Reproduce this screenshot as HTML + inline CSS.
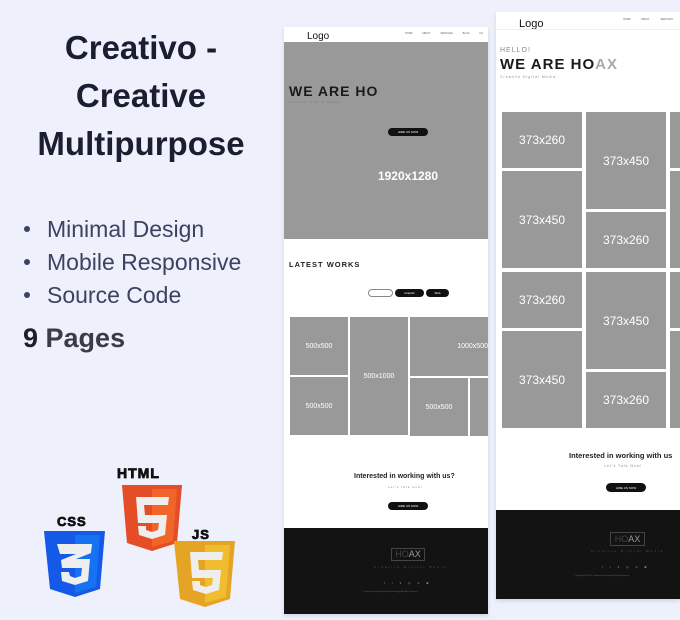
<!DOCTYPE html>
<html><head><meta charset="utf-8"><style>
*{margin:0;padding:0;box-sizing:border-box}
body{width:680px;height:620px;background:#eef0fb;font-family:"Liberation Sans",sans-serif;position:relative;overflow:hidden}
.abs{position:absolute}
.t{left:0;width:282px;text-align:center;font-weight:bold;font-size:33px;color:#1b1d30;line-height:48px}
.li{left:24px;font-size:23px;color:#3d4162}
.li:before{content:"";display:inline-block;width:6px;height:6px;border-radius:50%;background:#3d4162;margin-right:17px;vertical-align:middle;position:relative;top:-2px}
.g{background:#999;color:#fff;display:flex;align-items:center;justify-content:center;position:absolute}
.btn{background:#111;color:#fff;border-radius:6px;font-size:3px;display:flex;align-items:center;justify-content:center;position:absolute}
</style></head><body>
<div class="abs t" style="top:24px">Creativo -</div>
<div class="abs t" style="top:72px">Creative</div>
<div class="abs t" style="top:120px">Multipurpose</div>
<div class="abs li" style="top:216px">Minimal Design</div>
<div class="abs li" style="top:249px">Mobile Responsive</div>
<div class="abs li" style="top:282px">Source Code</div>
<div class="abs" style="left:23px;top:323px;font-size:27px;font-weight:bold;color:#1b1d30">9 <span style="color:#3a3a48">Pages</span></div>

<svg class="abs" style="left:40px;top:460px" width="200" height="155" viewBox="0 0 200 155">
<g font-family="Liberation Sans,sans-serif" font-weight="bold" fill="#111" stroke="#111" stroke-width="0.8">
<text x="77" y="18" font-size="14" letter-spacing="1">HTML</text>
<text x="17" y="66" font-size="13" letter-spacing="1">CSS</text>
<text x="152" y="79" font-size="13" letter-spacing="1">JS</text>
</g>
<path d="M82 25h60l-5 58-25 8-25-8z" fill="#e44d26"/><path d="M112 29h25l-4 52-21 6z" fill="#f16529"/>
<path d="M96 37h33l-1 8h-24l1 10h22l-2 20-13 4-13-4-1-9h8l0 4 6 2 6-2 1-7h-21z" fill="#eee"/>
<path d="M4 71h61l-5 58-25 8-25-8z" fill="#1559e8"/><path d="M35 75h25l-4 52-21 6z" fill="#1572f0"/>
<path d="M17 84h35l-1 9-15 6h14l-2 22-13 4-13-4-1-9h8l1 4 5 2 6-2 1-8h-20l-1-8 15-6h-16z" fill="#eee"/>
<path d="M134 81h61l-5 58-25 8-25-8z" fill="#e5a424"/><path d="M165 85h25l-4 52-21 6z" fill="#efbd2e"/>
<path d="M150 92h33l-1 8h-24l1 10h22l-2 20-13 4-13-4-1-9h8l0 4 6 2 6-2 1-7h-21z" fill="#eee"/>
</svg>

<!-- screen 1 -->
<div class="abs" style="left:284px;top:27px;width:204px;height:587px;background:#fff;box-shadow:0 2px 4px rgba(0,0,0,.12)">
 <div class="abs" style="left:23px;top:4px;font-size:10px;color:#111">Logo</div>
 <div class="abs" style="left:121px;top:5px;font-size:2.5px;color:#666;word-spacing:9px;white-space:nowrap">HOME ABOUT SERVICES BLOG CO</div>
 <div class="g" style="left:0;top:15px;width:204px;height:197px;font-size:12px;font-weight:bold;padding-top:70px;padding-left:44px">1920x1280</div>
 <div class="abs" style="left:5px;top:56px;font-size:14px;font-weight:bold;color:#1a1a1a;letter-spacing:1px">WE ARE HO</div>
 <div class="abs" style="left:5px;top:73px;font-size:3px;color:#777;letter-spacing:1px">Creative Digital Media.</div>
 <div class="btn" style="left:104px;top:101px;width:40px;height:8px">HIRE US NOW</div>
 <div class="abs" style="left:5px;top:233px;font-size:7.5px;font-weight:bold;letter-spacing:1px;color:#222">LATEST WORKS</div>
 <div class="abs" style="left:84px;top:262px;width:25px;height:8px;border:1px solid #888;border-radius:5px"></div>
 <div class="btn" style="left:111px;top:262px;width:29px;height:8px">Graphic</div>
 <div class="btn" style="left:142px;top:262px;width:23px;height:8px">Web</div>
 <div class="g" style="left:6px;top:290px;width:58px;height:58px;font-size:7px">500x500</div>
 <div class="g" style="left:6px;top:350px;width:58px;height:58px;font-size:7px">500x500</div>
 <div class="g" style="left:66px;top:290px;width:58px;height:118px;font-size:7px">500x1000</div>
 <div class="g" style="left:126px;top:290px;width:78px;height:59px;font-size:7px;justify-content:flex-end">1000x500</div>
 <div class="g" style="left:126px;top:351px;width:58px;height:58px;font-size:7px">500x500</div>
 <div class="g" style="left:186px;top:351px;width:18px;height:58px"></div>
 <div class="abs" style="left:70px;top:446px;font-size:7px;font-weight:bold;color:#222">Interested in working with us?</div>
 <div class="abs" style="left:104px;top:458px;font-size:3px;color:#888;letter-spacing:1px">Let's Talk Now!</div>
 <div class="btn" style="left:104px;top:475px;width:40px;height:8px">HIRE US NOW</div>
 <div class="abs" style="left:0;top:501px;width:204px;height:86px;background:#131313">
  <div class="abs" style="left:107px;top:20px;width:34px;height:13px;border:1px solid #444;font-size:9px;color:#999;text-align:center;line-height:11px"><span style="color:#444">HO</span>AX</div>
  <div class="abs" style="left:90px;top:37px;font-size:3px;color:#555;letter-spacing:2px">Creative Digital Media</div>
  <div class="abs" style="left:100px;top:53px;font-size:3px;color:#999;word-spacing:6px">f ▪ ▾ ◎ in ◙</div>
  <div class="abs" style="left:78px;top:63px;font-size:2px;color:#666">© Copy and all rights Reserved Technology All Right Reserved</div>
 </div>
</div>

<!-- screen 2 -->
<div class="abs" style="left:496px;top:12px;width:184px;height:587px;background:#fff;box-shadow:0 2px 4px rgba(0,0,0,.12)">
 <div class="abs" style="left:23px;top:6px;font-size:11px;color:#111">Logo</div>
 <div class="abs" style="left:127px;top:6px;font-size:2.5px;color:#666;word-spacing:10px;white-space:nowrap">HOME ABOUT SERVICES</div>
 <div class="abs" style="left:0;top:17px;width:184px;height:1px;background:#eee"></div>
 <div class="abs" style="left:4px;top:35px;font-size:7px;color:#888;letter-spacing:1px">HELLO!</div>
 <div class="abs" style="left:4px;top:44px;font-size:15px;font-weight:bold;color:#1a1a1a;letter-spacing:1px">WE ARE HO<span style="color:#aaa">AX</span></div>
 <div class="abs" style="left:4px;top:63px;font-size:3.5px;color:#888;letter-spacing:1px">Creative Digital Media.</div>
 <div class="g" style="left:6px;top:100px;width:80px;height:56px;font-size:12px">373x260</div>
 <div class="g" style="left:6px;top:159px;width:80px;height:97px;font-size:12px">373x450</div>
 <div class="g" style="left:6px;top:260px;width:80px;height:56px;font-size:12px">373x260</div>
 <div class="g" style="left:6px;top:319px;width:80px;height:97px;font-size:12px">373x450</div>
 <div class="g" style="left:90px;top:100px;width:80px;height:97px;font-size:12px">373x450</div>
 <div class="g" style="left:90px;top:200px;width:80px;height:56px;font-size:12px">373x260</div>
 <div class="g" style="left:90px;top:260px;width:80px;height:97px;font-size:12px">373x450</div>
 <div class="g" style="left:90px;top:360px;width:80px;height:56px;font-size:12px">373x260</div>
 <div class="g" style="left:174px;top:100px;width:10px;height:56px"></div>
 <div class="g" style="left:174px;top:159px;width:10px;height:97px"></div>
 <div class="g" style="left:174px;top:260px;width:10px;height:56px"></div>
 <div class="g" style="left:174px;top:319px;width:10px;height:97px"></div>
 <div class="abs" style="left:73px;top:439px;font-size:7.5px;font-weight:bold;color:#222;white-space:nowrap">Interested in working with us</div>
 <div class="abs" style="left:108px;top:452px;font-size:3.5px;color:#888;letter-spacing:1px">Let's Talk Now!</div>
 <div class="btn" style="left:110px;top:471px;width:40px;height:9px">HIRE US NOW</div>
 <div class="abs" style="left:0;top:498px;width:184px;height:89px;background:#131313">
  <div class="abs" style="left:114px;top:22px;width:35px;height:14px;border:1px solid #444;font-size:9px;color:#999;text-align:center;line-height:12px"><span style="color:#444">HO</span>AX</div>
  <div class="abs" style="left:95px;top:39px;font-size:3px;color:#555;letter-spacing:2px;white-space:nowrap">Creative Digital Media</div>
  <div class="abs" style="left:106px;top:55px;font-size:3px;color:#999;word-spacing:6px;white-space:nowrap">f ▪ ▾ ◎ in ◙</div>
  <div class="abs" style="left:78px;top:65px;font-size:2px;color:#666;white-space:nowrap">© Copyright 2021 by Company Technology All Right Reserved</div>
 </div>
</div>
</body></html>
